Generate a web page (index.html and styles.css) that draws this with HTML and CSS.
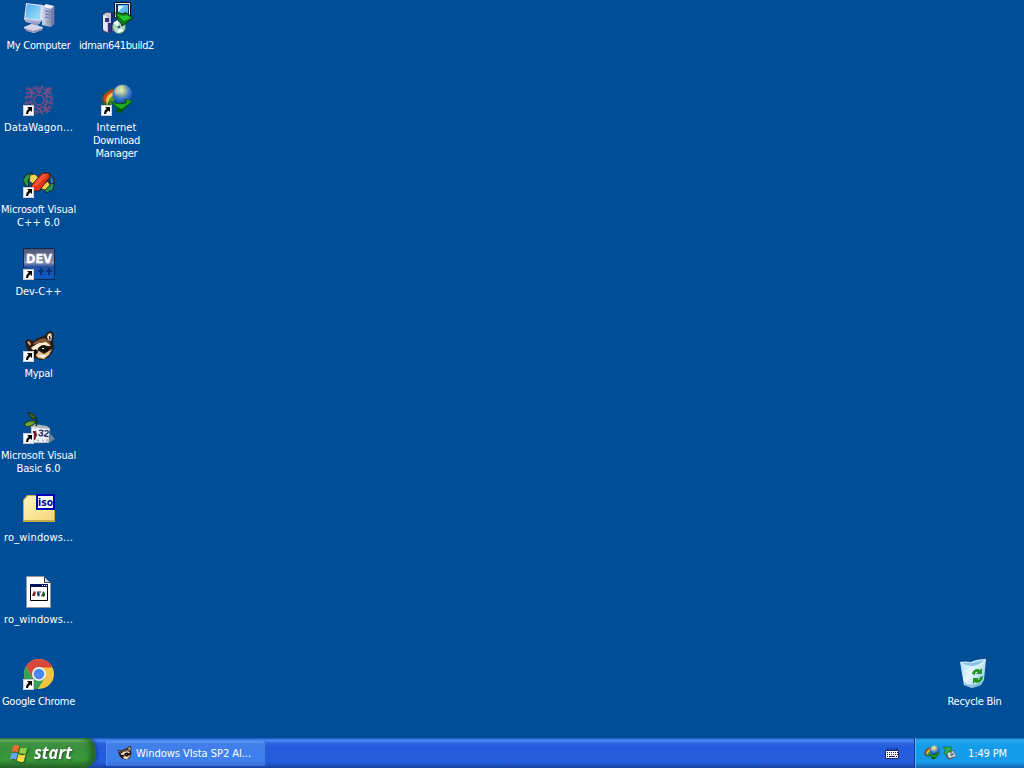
FILE: index.html
```html
<!DOCTYPE html>
<html lang="en">
<head>
<meta charset="utf-8">
<title>Desktop</title>
<link rel="stylesheet" href="styles.css">
</head>
<body>
<svg class="defs" width="0" height="0" aria-hidden="true">
  <defs>
    <linearGradient id="screen" x1="0" y1="0" x2="1" y2="1"><stop offset="0" stop-color="#4fa8ee"/><stop offset="1" stop-color="#a5e6fa"/></linearGradient>
    <linearGradient id="tower" x1="0" x2="1"><stop offset="0" stop-color="#d3d7ee"/><stop offset="1" stop-color="#8a94c2"/></linearGradient>
    <radialGradient id="globe" cx=".45" cy=".3" r=".7"><stop offset="0" stop-color="#f4f2c4"/><stop offset=".3" stop-color="#9ab39a"/><stop offset=".6" stop-color="#3676cc"/><stop offset="1" stop-color="#123c9c"/></radialGradient>
    <linearGradient id="dev" x2="0" y2="1"><stop offset="0" stop-color="#4c5478"/><stop offset=".45" stop-color="#8c90b4"/><stop offset=".6" stop-color="#1f509e"/><stop offset="1" stop-color="#0a5bc8"/></linearGradient>
    <linearGradient id="folder" x2="1" y2="1"><stop offset="0" stop-color="#fff6bd"/><stop offset="1" stop-color="#f5d877"/></linearGradient>
    <linearGradient id="bin" x2="1" y2=".6"><stop offset="0" stop-color="#a5d6f5"/><stop offset=".5" stop-color="#e6f8fd"/><stop offset="1" stop-color="#9bd0ee"/></linearGradient>
    <symbol id="shortcut" viewBox="0 0 11 11">
      <path d="M0 0h11v11H0z" fill="#fff"/><path d="M.5 .5h10v10H.5z" fill="none" stroke="#c7ccd4"/>
      <path d="M4 2h5v5L7.500 5.500Q5 6.500 5 9H3Q2.800 6 5.600 3.600z" fill="#000"/>
    </symbol>
    <symbol id="raccoon" viewBox="0 0 32 32">
      <path d="M2 10l3-2 5 2 5-3 6-2 4-4 4-1 2 4-1 6 1 6-2 6-4 5-7 2-7-2-5-5-3-7z" fill="#2c1b12"/>
      <path d="M24 6l1-3 3-1 1 4-1 4-3-1z" fill="#e6dccb"/><path d="M26 5l1 0 1 3-2 1z" fill="#4b3225"/>
      <path d="M4 11l2-1 2 3-1 2z" fill="#c9ad84"/>
      <path d="M10 12l5-3 6-2 5 3 2 5-3-2-6-2-5 2-4 0z" fill="#82593a"/>
      <path d="M8 17l4-3 4-2 7-1 5 4-3 0-6-1-4 3-1 4-4-2z" fill="#fff0d2"/>
      <path d="M17 16l5-2 4 4-2 3-4 0-4-2z" fill="#0f0c0a"/>
      <path d="M11 22l5-2 5 3 8-5-3 6-5 4-6-1z" fill="#e3c193"/><path d="M14 24l5 0 5 0-4 3z" fill="#fff0d8"/>
      <path d="M9 20l4-2 2 3-2 3-3-1z" fill="#0f0c0a"/><path d="M19 17h2v1h-2z" fill="#fff"/>
    </symbol>
    <symbol id="idm" viewBox="0 0 32 32">
      <path d="M16 4Q4 5 1 13Q0 18 3 22L12 24Q8 19 9 15Q11 10 18 9z" fill="#28602a"/>
      <path d="M14 5Q5 7 2 14L4 20Q5 11 15 8z" fill="#c94628"/>
      <path d="M13 8Q6 10 5 16L6 22Q8 13 15 11z" fill="#efc53c"/>
      <path d="M15 11Q9 12 8 17L10 22Q11 16 18 14z" fill="#4e9a35"/>
      <circle cx="21.500" cy="10.500" r="10" fill="url(#globe)"/>
      <path d="M13 8l3-5 5-2 3 3-3 1-2 4-4 2z" fill="#dde3a5" opacity=".55"/>
      <path d="M9 17Q18 21 24 18L23 15 32 17 20 29 14 27 16 24Q12 22 9 17z" fill="#06550f"/>
      <path d="M11 18Q18 22 26 19L25 16 31 17 21 25Q15 23 11 18z" fill="#20aa22"/>
    </symbol>
  </defs>
</svg>

<div class="screen">
  <main class="desktop">
    <div class="column">
      <div class="item">
        <svg class="icon" viewBox="0 0 32 32">
          <path d="M19 5l4-3 9 2v18l-4 3-9-2z" fill="#4d5a88"/>
          <path d="M19 5l9 2v18l-9-2z" fill="url(#tower)"/><path d="M28 7l3-3v18l-3 3z" fill="#717daf"/><path d="M19 5l4-3 8 2-3 3z" fill="#eceffd"/>
          <path d="M22 9l5 1M22 12l5 1M22 15l5 1" stroke="#666f9f"/><path d="M24 19h2v2h-2z" fill="#6bb85e"/>
          <path d="M3 1l17 2-1 15-3 4-13-2-2-3z" fill="#dfe0f1"/>
          <path d="M4 2l14 2-1 14-15-2z" fill="url(#screen)"/><path d="M2 17l14 2 2-2-1 4-2 1-12-2z" fill="#a9abd0"/>
          <path d="M8 20l7 1 1 4-8-1z" fill="#9299c2"/>
          <path d="M1 25l7-3 12 3-1 3-8 3-7-2-3-3z" fill="#d4d5ea"/><path d="M1 26l9 3 10-3-1 2-8 3-7-2z" fill="#8e91b8"/>
        </svg>
        <span class="label"><span class="w64">My Computer</span></span>
      </div>
      <div class="item">
        <svg class="icon" viewBox="0 0 32 32">
          <g fill="none" stroke="#734d84" stroke-width="1.500">
            <circle cx="16" cy="16" r="5"/><circle cx="16" cy="16" r="8.500" stroke-dasharray="3 1"/><circle cx="16" cy="16" r="12" stroke-dasharray="4 1.500"/>
            <path d="M3 4l7 4-3 5-5 0M29 4l-7 4 3 5 5 0M12 2l4 6 4-6M2 20l6-2 3 6-4 5M30 20l-6-2-3 6 4 5M12 30l4-6 4 6M3 9l7 0M22 9l7-1M3 24l8 0M21 24l8 0M6 3l4 6M26 3l-4 6M27 28l-6-5"/>
          </g>
          <circle cx="16" cy="16" r="14" fill="none" stroke="#8c4e6c" stroke-dasharray="1.500 3"/>
          <circle cx="16" cy="16" r="7" fill="none" stroke="#a34b63" stroke-dasharray="2 2"/>
          <use href="#shortcut" y="21" width="11" height="11"/>
        </svg>
        <span class="label"><span class="w69">DataWagon...</span></span>
      </div>
      <div class="item">
        <svg class="icon" viewBox="0 0 32 32">
          <g stroke="#141a22" stroke-width=".8">
            <path d="M0 14l3-5 6-2 1 3-5 4 1 7-4-2z" fill="#2c9b46"/>
            <path d="M7 9l5-1 4 4-6 6-4-3z" fill="#f3d54b"/>
            <path d="M25 7l3 1 4 7-2 9-7 3-2-4 6-5z" fill="#258f50"/>
            <path d="M27 9l3 4 1 5-4-1z" fill="#367bcf"/>
            <path d="M19 19l6-4 2 4-5 5-4-1z" fill="#f5ce43"/>
            <path d="M8 20l11-13 7 0 1 4-11 14-7 0z" fill="#e5331b"/>
          </g>
          <path d="M9 20l11-12 5 0-11 12z" fill="#f55434"/>
          <use href="#shortcut" y="21" width="11" height="11"/>
        </svg>
        <span class="label"><span class="w75">Microsoft Visual</span><span class="w43">C++ 6.0</span></span>
      </div>
      <div class="item">
        <svg class="icon" viewBox="0 0 32 32">
          <path d="M0 0h32v32H0z" fill="#14284d"/><path d="M1 1h30v30H1z" fill="url(#dev)"/>
          <text class="dev-text" x="16" y="15" text-anchor="middle" textLength="26" lengthAdjust="spacingAndGlyphs">DEV</text>
          <path d="M15 23h6M18 20v7M23 23h6M26 20v7" stroke="#07357f" stroke-width="2"/>
          <use href="#shortcut" y="21" width="11" height="11"/>
        </svg>
        <span class="label"><span class="w46">Dev-C++</span></span>
      </div>
      <div class="item">
        <svg class="icon" viewBox="0 0 32 32"><use href="#raccoon" y="1" width="32" height="32"/><use href="#shortcut" y="21" width="11" height="11"/></svg>
        <span class="label"><span class="w28">Mypal</span></span>
      </div>
      <div class="item">
        <svg class="icon" viewBox="0 0 32 32">
          <path d="M27 21l5 6-6 4H12z" fill="#6f8296"/>
          <path d="M8 13l15 2 4 1-1 15H8z" fill="#edf3f4" stroke="#4b6370" stroke-width=".7"/>
          <path d="M7 15l5-3 12 2 3 3z" fill="#aab5be"/>
          <path d="M5 0l5 2 4 5-6-1z" fill="#42601c" stroke="#152a15"/>
          <path d="M1 12l5-3 7 0-3 4-6 2z" fill="#71a22d" stroke="#193a15"/>
          <path d="M13 7q2 3 0 7" fill="none" stroke="#163217" stroke-width="1.500"/>
          <path d="M10 19l3 0 1 4-2 5-2 0z" fill="#7b1625"/>
          <text class="cal-text" x="14.500" y="24" transform="rotate(7 15 25)">32</text>
          <path d="M14 28l2 1M19 28l2 1M24 27v3" stroke="#8b98a2"/>
          <use href="#shortcut" y="21" width="11" height="11"/>
        </svg>
        <span class="label"><span class="w75">Microsoft Visual</span><span class="w44">Basic 6.0</span></span>
      </div>
      <div class="item">
        <svg class="icon" viewBox="0 0 32 32">
          <path d="M0 6l4-5h11l2 3h15v24H0z" fill="#c5ab4c"/><path d="M1 6l4-4h9l2 4h15v20H1z" fill="url(#folder)"/>
          <path d="M14 1h17v14H14z" fill="#fff" stroke="#0000b5" stroke-width="2"/>
          <text class="iso-text" x="22.500" y="12" text-anchor="middle" textLength="15" lengthAdjust="spacingAndGlyphs">iso</text>
        </svg>
        <span class="label"><span class="w69">ro_windows...</span></span>
      </div>
      <div class="item">
        <svg class="icon" viewBox="0 0 32 32">
          <path d="M3.500 .5h18l6 6v25h-24z" fill="#fff" stroke="#8f989e"/><path d="M21.500 .5v6h6z" fill="#c5d6df" stroke="#31444f"/>
          <path d="M7.500 8.500h17v16h-17z" fill="#fff" stroke="#000"/><path d="M7 8h18v3H7z" fill="#071263"/><path d="M19 9.500h5" stroke="#fff" stroke-dasharray="1 1"/>
          <path d="M11 15l2 1-1 4-3 0 1-3z" fill="#a13734"/><path d="M14 15l3 3-1 3-2-2z" fill="#18458d"/><path d="M20 15l2 2-1 4-3-1 1-2z" fill="#28703b"/><path d="M10 18h2M15 16h3M20 19h2" stroke="#111"/>
        </svg>
        <span class="label"><span class="w69">ro_windows...</span></span>
      </div>
      <div class="item">
        <svg class="icon" viewBox="0 0 32 32">
          <circle cx="16" cy="16" r="15" fill="#f2c53c"/>
          <path d="M3 8.500A15 15 0 0 1 29.500 9.500H16z" fill="#d9493b"/><path d="M3 8.500L9.500 20 16 16V8.500z" fill="#d9493b"/>
          <path d="M3 8.500A15 15 0 0 0 15 31L22 19.500 16 16 9.500 19.700z" fill="#37a35a"/>
          <circle cx="16" cy="16" r="7" fill="#f2f5ee"/><circle cx="16" cy="16" r="5.300" fill="#4888ef"/>
          <use href="#shortcut" y="21" width="11" height="11"/>
        </svg>
        <span class="label"><span class="w73">Google Chrome</span></span>
      </div>
    </div>

    <div class="column">
      <div class="item">
        <svg class="icon" viewBox="0 0 32 32">
          <path d="M13.500 .5h16v15h-16z" fill="#dbe4e7" stroke="#111"/><path d="M15 2h13v12H15z" fill="#0f2c69"/><path d="M17 3h10v9H17z" fill="#5fb8ee"/><path d="M17 4h6l-6 6z" fill="#d8ffff"/>
          <path d="M2 12l4-2 6 1v18l-5 2-5-2z" fill="#c0c4d5" stroke="#20233f" stroke-width=".7"/><path d="M2 13l4 1v15l-4-2z" fill="#e7e8ee"/><path d="M4 16h4v4H4zM7 21h4v9H7z" fill="#313082"/><path d="M10 11h2v17h-2z" fill="#20246a"/>
          <circle cx="18" cy="25" r="6.500" fill="#a9dcc8" stroke="#577a73"/><path d="M18 25l-6-4 5-3zM18 25l5 4-7 2z" fill="#ecfff7"/><circle cx="18" cy="25" r="1.500" fill="#38584d"/>
          <path d="M15 10q6 3 10 1l-1-1 8 6-11 8-1-3q-5-3-5-11z" fill="#0c7f1b" stroke="#062e0d"/><path d="M16 12q6 3 10 1l4 3-7 3z" fill="#1fc831"/>
        </svg>
        <span class="label"><span class="w75">idman641build2</span></span>
      </div>
      <div class="item">
        <svg class="icon" viewBox="0 0 32 32"><use href="#idm" width="32" height="32"/><use href="#shortcut" y="21" width="11" height="11"/></svg>
        <span class="label"><span class="w40">Internet</span><span class="w47">Download</span><span class="w42">Manager</span></span>
      </div>
    </div>

    <div class="column column-end">
      <div class="item">
        <svg class="icon" viewBox="0 0 32 32">
          <path d="M2 4l12 1 14-4-2 21-3 5-9 3-8-3z" fill="url(#bin)"/>
          <path d="M2 4q5-1 11 0 6-3 15-3-3 8-12 9-10 0-14-6z" fill="#d9f0fb"/>
          <path d="M4 5q6-1 10 0 5-2 12-3-4 5-11 6-7 0-11-3z" fill="#8cc2e4"/>
          <path d="M6 23l3 3 6 1 9-3-2 4-8 2-7-3z" fill="#70acd5" opacity=".65"/>
          <path d="M14 16q1-5 6-5l2 1 2-2v6h-6l2-2q-3-1-3 3zM25 18q0 6-6 7l-2-1-2 2v-6h6l-2 2q3 0 3-3z" fill="#239522"/>
        </svg>
        <span class="label"><span class="w54">Recycle Bin</span></span>
      </div>
    </div>
  </main>

  <footer class="taskbar">
    <button class="start">
      <svg class="flag" viewBox="0 0 18 18">
        <path d="M3 2q3-2 6 0L7.500 8q-3-2-6 0z" fill="#f16d36"/><path d="M10 3q3 2 6.500 0L15 9q-3 1-6.500-1z" fill="#8dd443"/><path d="M1.300 9q3-1.500 6 0l-1.500 6q-3-2-6 0z" fill="#66a9f4"/><path d="M8.200 9.500q3 2 6.500 .5L13 16.500q-3 1.500-6.500-1z" fill="#ffdb3d"/>
      </svg>
      <svg class="start-word" viewBox="0 0 40 24"><text x="0" y="18" textLength="38" lengthAdjust="spacingAndGlyphs">start</text></svg>
    </button>
    <button class="task">
      <svg class="task-icon" viewBox="0 0 32 32"><use href="#raccoon" width="32" height="32"/></svg>
      <span class="w115">Windows VIsta SP2 Al...</span>
    </button>
    <div class="language">
      <svg class="keyboard" viewBox="0 0 14 13"><path d="M3 3v-2M6 3v-2M9 3v-2M12 3v-2" fill="none" stroke="#182453"/><path d="M.5 3.500h13v8H.5z" fill="#fff" stroke="#15286a"/><path d="M2 5.500h11M2 7.500h11" stroke="#182453" stroke-dasharray="1 1"/><path d="M2 9.500h1M4 9.500h6M11 9.500h1" stroke="#182453"/></svg>
    </div>
    <div class="tray">
      <svg class="tray-icon" viewBox="0 0 32 32"><use href="#idm" width="32" height="32"/></svg>
      <svg class="tray-icon" viewBox="0 0 16 16"><path d="M4 8l7-3 4 6-8 4-3-3z" fill="#53646f"/><path d="M5 8l6-2 3 5-7 2z" fill="#d1dce1"/><path d="M8 9l3-1 1 2-3 1z" fill="#506f75"/><path d="M1 2l8 0 0 6-2-2-3 4-2-2 2-3z" fill="#35b342" stroke="#146330" stroke-width=".7"/></svg>
      <span class="clock">1:49 PM</span>
    </div>
  </footer>
</div>
<script src="labels.js"></script>
</body>
</html>
```

FILE: styles.css
```css
* { box-sizing: border-box; }
body { margin: 0; background: #004e98; font: 11px/13px "DejaVu Sans Condensed", "DejaVu Sans", sans-serif; font-stretch: condensed; color: #fff; overflow: hidden; }
.defs { position: absolute; }
.screen { display: flex; flex-direction: column; width: 1024px; height: 768px; }
.desktop { flex: 1; display: flex; min-height: 0; }
.column { width: 78px; display: flex; flex-direction: column; }
.column-end { margin-left: auto; margin-right: 10px; padding-top: 656px; }
.item { height: 82px; flex: none; padding-top: 2px; display: flex; flex-direction: column; align-items: center; gap: 5px; }
.icon { width: 32px; height: 32px; display: block; flex: none; }
.column-end .icon { margin-right: 2px; }
.label { display: flex; flex-direction: column; align-items: center; white-space: nowrap; margin-right: 1px; }
[class^="w"], .clock { display: block; white-space: nowrap; }
.w28 { width: 28px; } .w40 { width: 40px; } .w42 { width: 42px; }
.w43 { width: 43px; } .w44 { width: 44px; } .w46 { width: 46px; } .w47 { width: 47px; }
.w54 { width: 54px; } .w64 { width: 64px; } .w69 { width: 69px; } .w73 { width: 73px; }
.w75 { width: 75px; } .w115 { width: 115px; }
.dev-text { font: bold 13px "DejaVu Sans", sans-serif; fill: #fff; stroke: #fff; stroke-width: .3px; }
.cal-text { font: bold 10px "Liberation Sans", sans-serif; fill: #16236c; }
.iso-text { font: bold 11px "DejaVu Sans Condensed", sans-serif; fill: #0000a0; }
button { border: 0; color: inherit; font: inherit; margin: 0; }
.taskbar { height: 30px; display: flex; align-items: stretch; background: linear-gradient(#1941a5 0, #3674e2 1px, #4b8cf3 3px, #2b65df 5px, #245bdc 9px, #245edb 24px, #1d4bba 28px, #183f9c 30px); }
.start { width: 96px; padding: 0 0 0 10px; display: flex; align-items: center; gap: 5px; border-radius: 0 9px 11px 0 / 0 15px 15px 0; background: linear-gradient(#296e2a 0, #70b76e 2px, #439447 5px, #38903a 10px, #3a9a3b 22px, #2c7c2d 27px, #236026 30px); box-shadow: inset -5px -1px 6px #236225, 2px 0 3px #1747ac; }
.flag { width: 19px; height: 19px; flex: none; filter: drop-shadow(1px 1px 1px #205029); }
.start-word { width: 40px; height: 24px; overflow: visible; font: italic bold 18px "Open Sans", "Liberation Sans", sans-serif; fill: #fff; filter: drop-shadow(1px 1px 1px #234c25); }
.task { width: 160px; height: 25px; margin: 3px 0 0 10px; padding: 0 0 0 11px; display: flex; align-items: center; gap: 4px; border-radius: 2px; background: linear-gradient(#6499f6, #417ee9 3px, #3c80ee 18px, #3b79e5 22px, #356bd6); box-shadow: inset 1px 0 #598df0, inset -1px 0 #2863c6; text-align: left; }
.task-icon { width: 15px; height: 15px; flex: none; }
.language { margin-left: auto; width: 29px; display: flex; align-items: center; }
.keyboard { width: 14px; height: 13px; }
.tray { width: 110px; padding: 0 0 0 9px; display: flex; align-items: center; gap: 2px; border-left: 1px solid #0b3488; background: linear-gradient(#105eb8 0, #2caaed 2px, #20a2ed 4px, #149ce9 8px, #169aea 24px, #1581cb 27px, #1264aa 30px); box-shadow: inset 1px 0 #38c5f5; }
.tray-icon { width: 16px; height: 16px; flex: none; }
.clock { width: 39px; margin-left: 8px; }
```

FILE: labels.js
```js
// Fit each caption to its allotted width by spreading letter spacing.
for (const el of document.querySelectorAll('[class^="w"], .clock')) {
  const range = document.createRange();
  range.selectNodeContents(el);
  const natural = range.getBoundingClientRect().width;
  const count = el.textContent.length;
  el.style.letterSpacing = ((el.clientWidth - natural) / count) + 'px';
}
```
